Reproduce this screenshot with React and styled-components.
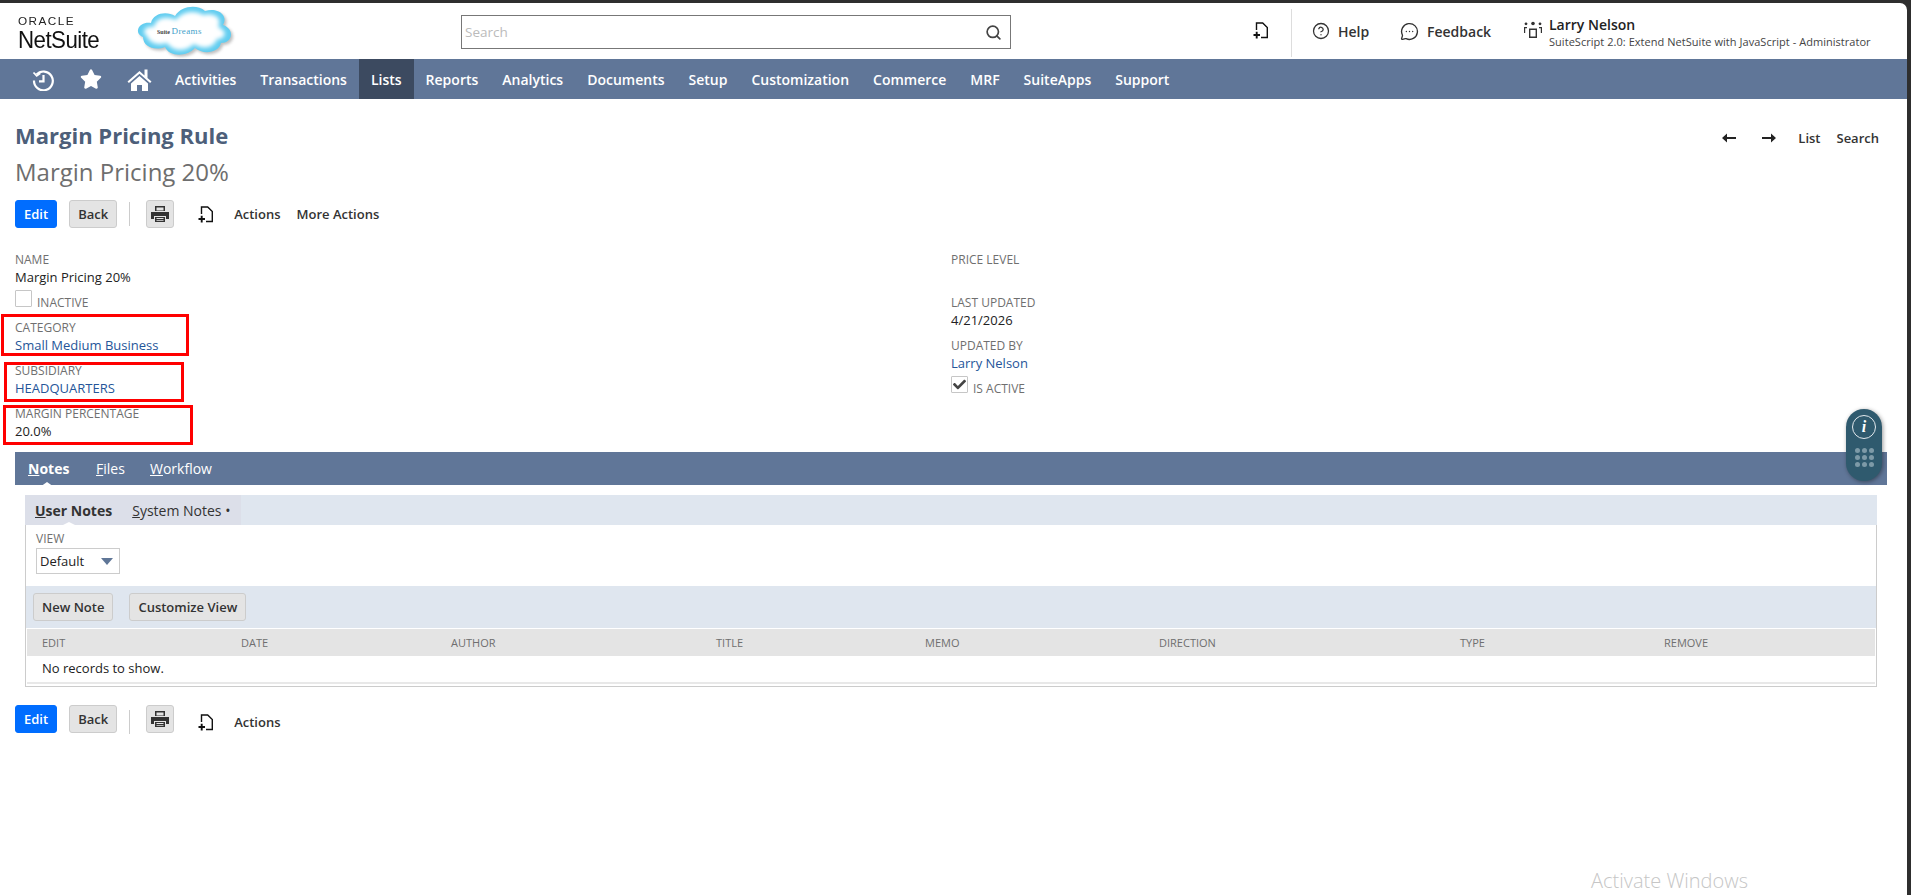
import React from "react";
import styled, { createGlobalStyle } from "styled-components";
import { Search as SearchGlyph, CircleHelp, MessageCircleMore } from "lucide-react";
import { FaStar, FaCheck } from "react-icons/fa";

const navItems = [
  "Activities",
  "Transactions",
  "Lists",
  "Reports",
  "Analytics",
  "Documents",
  "Setup",
  "Customization",
  "Commerce",
  "MRF",
  "SuiteApps",
  "Support",
];

const columns = ["EDIT", "DATE", "AUTHOR", "TITLE", "MEMO", "DIRECTION", "TYPE", "REMOVE"];

const AddIcon = () => (
  <svg width="16" height="17" viewBox="0 0 16 17" fill="none" stroke="#111" strokeWidth="1.4">
    <path d="M3.5 8V1h6.2l4.6 4.6V15.5H8" />
    <path d="M0.5 13h6.5M3.7 9.8v6.6" strokeWidth="1.9" />
  </svg>
);

const PrintIcon = () => (
  <svg width="18" height="16" viewBox="0 0 18 16">
    <path d="M4 0h10v5H4z M0 6h18v7h-3v-3H3v3H0z" fill="#333" />
    <path d="M4 11h10v5H4z" fill="#333" />
    <path d="M5.5 1.5h7v3h-7z M5.5 12h7v1h-7z M5.5 14h7v.8h-7z" fill="#e4e4e4" />
  </svg>
);

const RecordToolbar = ({ bottom }) => (
  <Toolbar>
    <EditButton>Edit</EditButton>
    <GreyButton>Back</GreyButton>
    <ToolDivider $bottom={bottom} />
    <PrintButton>
      <PrintIcon />
    </PrintButton>
    <ActionIcon $bottom={bottom}>
      <AddIcon />
    </ActionIcon>
    <ActionLink $bottom={bottom}>Actions</ActionLink>
    {!bottom && <MoreLink>More Actions</MoreLink>}
  </Toolbar>
);

const App = () => {
  return (
    <Frame>
      <GlobalStyle />
      <Header>
        <LogoBlock>
          <OracleText>ORACLE</OracleText>
          <NetSuiteText>NetSuite</NetSuiteText>
        </LogoBlock>
        <CloudHolder>
          <svg width="104" height="58" viewBox="-2 -3 104 58">
            <defs>
              <filter id="soft" x="-20%" y="-20%" width="140%" height="140%">
                <feGaussianBlur stdDeviation="2" />
              </filter>
              <filter id="shade" x="-20%" y="-20%" width="140%" height="140%">
                <feGaussianBlur stdDeviation="1.4" />
              </filter>
            </defs>
            <path
              d="M8 32C-2 28 4 16 16 18 18 8 32 6 40 11 46 1 62-1 70 6 82 2 94 10 88 20 100 24 98 38 86 38 84 48 68 50 60 43 52 52 34 52 30 42 20 46 8 42 8 32Z"
              fill="#8b8b8b"
              opacity="0.55"
              filter="url(#shade)"
              transform="translate(2 2)"
            />
            <path
              d="M8 32C-2 28 4 16 16 18 18 8 32 6 40 11 46 1 62-1 70 6 82 2 94 10 88 20 100 24 98 38 86 38 84 48 68 50 60 43 52 52 34 52 30 42 20 46 8 42 8 32Z"
              fill="#62cdf0"
            />
            <path
              d="M12 31C6 27 10 20 19 22 21 12 32 11 41 15 47 6 61 5 68 10 79 7 88 13 83 22 93 26 91 34 82 34 79 43 68 45 59 39 51 47 38 47 32 38 23 41 14 38 12 31Z"
              fill="#fff"
              filter="url(#soft)"
            />
            <text x="22" y="29" fontFamily="Liberation Serif, serif" fontSize="6" fontWeight="700" fill="#444">
              Suite
            </text>
            <text x="36.5" y="29" fontFamily="Liberation Serif, serif" fontSize="9" letterSpacing="0.4" fill="#3f9fca">
              Dreams
            </text>
          </svg>
        </CloudHolder>
        <SearchBox>
          <SearchInput placeholder="Search" />
          <SearchGlyph size={17} color="#444" strokeWidth={2.4} />
        </SearchBox>
        <HeaderRight>
          <AddHolder>
            <AddIcon />
          </AddHolder>
          <HeaderDivider />
          <HeaderLink $width={88}>
            <CircleHelp size={18} color="#333" strokeWidth={1.7} />
            <span>Help</span>
          </HeaderLink>
          <HeaderLink $width={123}>
            <MessageCircleMore size={19} color="#333" strokeWidth={1.7} />
            <span>Feedback</span>
          </HeaderLink>
          <RoleIcon>
            <svg width="20" height="18" viewBox="0 0 20 18" fill="#333">
              <circle cx="10" cy="2.5" r="1.8" />
              <circle cx="3" cy="2.8" r="1.4" />
              <circle cx="17" cy="2.8" r="1.4" />
              <path d="M6 7.5h8V17H6z M7.4 9v6.6h5.2V9z" fillRule="evenodd" />
              <path d="M1 6h3v1.2H2.2V12H1z M16 6h3v6h-1.2V7.2H16z" />
            </svg>
          </RoleIcon>
          <UserBlock>
            <UserName>Larry Nelson</UserName>
            <UserRole>SuiteScript 2.0: Extend NetSuite with JavaScript - Administrator</UserRole>
          </UserBlock>
        </HeaderRight>
      </Header>

      <Nav>
        <NavIcon $width={32}>
          <svg width="22" height="24" viewBox="0 0 22 24" fill="none" stroke="#fff" strokeWidth="2.2">
            <path d="M4.5 7.5A9.4 9.4 0 1 1 2 13.5" />
            <path d="M1.5 5.5l3.2 3.4 3.6-2.6" strokeWidth="1.8" />
            <path d="M11.5 8v6.4H7" />
          </svg>
        </NavIcon>
        <NavIcon $width={64}>
          <FaStar size={22} color="#fff" />
        </NavIcon>
        <NavIcon $width={32}>
          <svg width="25" height="24" viewBox="0 0 25 24" fill="#fff">
            <path d="M12.5 4L0.5 14.5l1.4 1.4L12.5 6.8l10.6 9.1 1.4-1.4-4-3.5V2.5h-3V8.5z" />
            <path d="M4 16.5L12.5 9l8.5 7.5V24h-6v-6h-5v6H4z" />
          </svg>
        </NavIcon>
        <NavList>
          {navItems.map((item) => (
            <NavItem key={item} $active={item === "Lists"}>
              {item}
            </NavItem>
          ))}
        </NavList>
      </Nav>

      <Main>
        <TitleRow>
          <PageTitle>Margin Pricing Rule</PageTitle>
          <PageLinks>
            <ArrowHolder>
              <svg width="14" height="10" viewBox="0 0 14 10" fill="#222">
                <path d="M0 5l5-4.5V4h9v2H5v3.5z" />
              </svg>
            </ArrowHolder>
            <ArrowHolder>
              <svg width="14" height="10" viewBox="0 0 14 10" fill="#222">
                <path d="M14 5L9 .5V4H0v2h9v3.5z" />
              </svg>
            </ArrowHolder>
            <PageLink>List</PageLink>
            <PageLink>Search</PageLink>
          </PageLinks>
        </TitleRow>
        <SubTitle>Margin Pricing 20%</SubTitle>
        <RecordToolbar />

        <FormGrid>
          <FormColumn>
            <Field>
              <Label>NAME</Label>
              <Value>Margin Pricing 20%</Value>
            </Field>
            <CheckRow>
              <CheckBox />
              <Label>INACTIVE</Label>
            </CheckRow>
            <Field $top={9}>
              <Label>CATEGORY</Label>
              <LinkValue>Small Medium Business</LinkValue>
              <RedMark $left={-14} $width={188} $top={-4} $bottom={-2} />
            </Field>
            <Field $top={7}>
              <Label>SUBSIDIARY</Label>
              <LinkValue>HEADQUARTERS</LinkValue>
              <RedMark $left={-11} $width={180} $top={1} $bottom={-5} />
            </Field>
            <Field $top={7}>
              <Label>MARGIN PERCENTAGE</Label>
              <Value>20.0%</Value>
              <RedMark $left={-12} $width={190} $top={1} $bottom={-5} />
            </Field>
          </FormColumn>
          <FormColumn>
            <Field>
              <Label>PRICE LEVEL</Label>
              <Value />
            </Field>
            <Field $top={7}>
              <Label>LAST UPDATED</Label>
              <Value>4/21/2026</Value>
            </Field>
            <Field $top={7}>
              <Label>UPDATED BY</Label>
              <LinkValue>Larry Nelson</LinkValue>
            </Field>
            <CheckRow>
              <CheckBox>
                <FaCheck size={13} color="#444" />
              </CheckBox>
              <Label>IS ACTIVE</Label>
            </CheckRow>
          </FormColumn>
        </FormGrid>

        <TabBar>
          <MainTab $active $width={68}>
            <u>N</u>otes
          </MainTab>
          <MainTab $width={54}>
            <u>F</u>iles
          </MainTab>
          <MainTab>
            <u>W</u>orkflow
          </MainTab>
          <InfoWidget>
            <InfoCircle>i</InfoCircle>
            <InfoDots>
              {Array.from({ length: 9 }).map((_, i) => (
                <InfoDot key={i} />
              ))}
            </InfoDots>
          </InfoWidget>
        </TabBar>

        <SubPanel>
          <SubTabs>
            <SubTabGroup>
              <SubTab $active>
                <u>U</u>ser Notes
              </SubTab>
              <SubTab>
                <u>S</u>ystem Notes •
              </SubTab>
            </SubTabGroup>
          </SubTabs>
          <PanelBody>
            <ViewArea>
              <ViewLabel>VIEW</ViewLabel>
              <SelectBox>
                <span>Default</span>
                <Caret />
              </SelectBox>
            </ViewArea>
            <ButtonBand>
              <GreyButton>New Note</GreyButton>
              <GreyButton>Customize View</GreyButton>
            </ButtonBand>
            <TableHead>
              {columns.map((col) => (
                <span key={col}>{col}</span>
              ))}
            </TableHead>
            <EmptyRow>No records to show.</EmptyRow>
          </PanelBody>
        </SubPanel>

        <BottomBar>
          <RecordToolbar bottom />
        </BottomBar>
      </Main>
      <Watermark>Activate Windows</Watermark>
    </Frame>
  );
};

export default App;

const GlobalStyle = createGlobalStyle`
  html, body {
    margin: 0;
    height: 100%;
    overflow: hidden;
    background-color: #2e2e2e;
  }
  body {
    font-family: "Open Sans", "Liberation Sans", sans-serif;
    font-size: 13px;
    color: #222;
  }
  * {
    box-sizing: border-box;
  }
`;

const Frame = styled.div`
  position: relative;
  margin: 3px 4px 0 0;
  height: 892px;
  background-color: #fff;
  border-top-right-radius: 7px;
  overflow: hidden;
`;

const Header = styled.div`
  height: 56px;
  display: flex;
  align-items: center;
`;

const LogoBlock = styled.div`
  width: 135px;
  padding: 6px 0 0 18px;
  display: flex;
  flex-direction: column;
`;

const OracleText = styled.div`
  font-family: "Liberation Sans", sans-serif;
  font-size: 10.5px;
  line-height: 11px;
  letter-spacing: 1.3px;
  transform: scaleX(1.12);
  transform-origin: left;
  color: #222;
`;

const NetSuiteText = styled.div`
  font-family: "Liberation Sans", sans-serif;
  font-size: 24px;
  line-height: 26px;
  letter-spacing: -0.6px;
  transform: scaleX(0.93);
  transform-origin: left;
  color: #111;
`;

const CloudHolder = styled.div`
  width: 326px;
  height: 56px;
  display: flex;
  svg {
    display: block;
    margin-left: -2px;
    margin-top: -1px;
  }
`;

const SearchBox = styled.div`
  width: 550px;
  height: 34px;
  margin-top: 2px;
  padding: 0 8px 0 3px;
  border: 1px solid #777;
  display: flex;
  align-items: center;
`;

const SearchInput = styled.input`
  flex: 1;
  border: 0;
  outline: 0;
  padding: 0;
  font-family: "Open Sans", sans-serif;
  font-size: 13.5px;
  &::placeholder {
    color: #bbb;
  }
`;

const HeaderRight = styled.div`
  flex: 1;
  height: 100%;
  display: flex;
  align-items: center;
`;

const AddHolder = styled.div`
  width: 280px;
  padding-left: 242px;
  height: 18px;
  flex-shrink: 0;
`;

const HeaderDivider = styled.div`
  width: 1px;
  height: 48px;
  margin-top: 4px;
  margin-right: 20px;
  background-color: #ddd;
`;

const HeaderLink = styled.div`
  width: ${(props) => props.$width}px;
  display: flex;
  align-items: center;
  gap: 8px;
  font-size: 14px;
  font-weight: 600;
  color: #333;
`;

const RoleIcon = styled.div`
  width: 26px;
  margin-top: 2px;
`;

const UserBlock = styled.div`
  display: flex;
  flex-direction: column;
  white-space: nowrap;
  margin-top: 3px;
`;

const UserName = styled.div`
  font-size: 14px;
  line-height: 17px;
  font-weight: 600;
  color: #222;
`;

const UserRole = styled.div`
  font-size: 11px;
  line-height: 17px;
  letter-spacing: 0.04px;
  color: #444;
`;

const Nav = styled.div`
  height: 40px;
  background-color: #607698;
  display: flex;
  align-items: center;
  padding-left: 27px;
`;

const NavIcon = styled.div`
  width: ${(props) => props.$width}px;
  display: flex;
  justify-content: center;
  svg {
    display: block;
  }
`;

const NavList = styled.div`
  height: 100%;
  display: flex;
  padding-left: 8px;
`;

const NavItem = styled.div`
  height: 100%;
  padding: 0 12px;
  display: flex;
  align-items: center;
  font-size: 14px;
  font-weight: 600;
  color: #fff;
  background-color: ${(props) => (props.$active ? "#3c4a60" : "transparent")};
`;

const Main = styled.div`
  padding: 22px 20px 0 15px;
`;

const TitleRow = styled.div`
  height: 30px;
  display: flex;
  align-items: center;
  justify-content: space-between;
`;

const PageTitle = styled.div`
  font-size: 22px;
  line-height: 28px;
  margin-top: -2px;
  font-weight: 700;
  color: #4d5f7a;
`;

const PageLinks = styled.div`
  display: flex;
  align-items: center;
  padding-right: 8px;
  margin-top: 4px;
`;

const ArrowHolder = styled.div`
  width: 40px;
  padding-left: 4px;
  display: flex;
  svg {
    display: block;
  }
`;

const PageLink = styled.div`
  font-size: 13px;
  font-weight: 600;
  color: #333;
  & + & {
    margin-left: 16px;
  }
`;

const SubTitle = styled.div`
  height: 30px;
  margin-top: 6px;
  font-size: 24px;
  line-height: 30px;
  color: #6e6e6e;
`;

const Toolbar = styled.div`
  height: 28px;
  margin-top: 13px;
  display: flex;
  align-items: center;
`;

const ButtonBase = styled.button`
  height: 28px;
  padding: 0 8px;
  border-radius: 3px;
  font-family: "Open Sans", sans-serif;
  font-size: 13px;
  font-weight: 600;
  cursor: pointer;
`;

const EditButton = styled(ButtonBase)`
  background-color: #006dff;
  border: 1px solid #006dff;
  color: #fff;
  margin-right: 12px;
`;

const GreyButton = styled(ButtonBase)`
  background-color: #e4e4e4;
  border: 1px solid #ccc;
  color: #333;
`;

const ToolDivider = styled.div`
  width: 1px;
  height: 24px;
  margin: ${(props) => (props.$bottom ? "6px" : "0")} 16px 0 12px;
  background-color: #ccc;
`;

const PrintButton = styled(GreyButton)`
  width: 28px;
  padding: 0;
  display: flex;
  align-items: center;
  justify-content: center;
`;

const ActionIcon = styled.div`
  margin: ${(props) => (props.$bottom ? "6px" : "0")} 0 0 24px;
  width: 36px;
  height: 17px;
`;

const ActionLink = styled.div`
  margin-top: ${(props) => (props.$bottom ? "6px" : "0")};
  font-size: 13px;
  font-weight: 600;
  color: #333;
`;

const MoreLink = styled(ActionLink)`
  margin-left: 16px;
`;

const FormGrid = styled.div`
  margin-top: 22px;
  display: grid;
  grid-template-columns: 936px 1fr;
  height: 202px;
`;

const FormColumn = styled.div`
  display: flex;
  flex-direction: column;
`;

const Field = styled.div`
  position: relative;
  margin-top: ${(props) => props.$top || 0}px;
`;

const Label = styled.div`
  height: 18px;
  font-size: 12px;
  line-height: 20px;
  color: #6f6f6f;
`;

const Value = styled.div`
  height: 18px;
  font-size: 13px;
  line-height: 18px;
  color: #222;
`;

const LinkValue = styled(Value)`
  color: #255599;
`;

const RedMark = styled.div`
  position: absolute;
  left: ${(props) => props.$left}px;
  width: ${(props) => props.$width}px;
  top: ${(props) => props.$top}px;
  bottom: ${(props) => props.$bottom}px;
  border: 3px solid #f00;
`;

const CheckRow = styled.div`
  margin-top: 4px;
  display: flex;
  align-items: flex-start;
  gap: 5px;
  height: 19px;
  ${Label} {
    margin-top: 3px;
  }
`;

const CheckBox = styled.div`
  width: 17px;
  height: 17px;
  border: 1px solid #c6c6c6;
  border-radius: 1px;
  display: flex;
  align-items: center;
  justify-content: center;
`;

const TabBar = styled.div`
  position: relative;
  height: 33px;
  background-color: #607698;
  display: flex;
  align-items: center;
  padding-left: 13px;
`;

const MainTab = styled.div`
  position: relative;
  width: ${(props) => (props.$width ? `${props.$width}px` : "auto")};
  font-size: 14px;
  font-weight: ${(props) => (props.$active ? 700 : 500)};
  color: #fff;
  ${(props) =>
    props.$active &&
    `&::after {
      content: "";
      position: absolute;
      left: 12px;
      bottom: -9px;
      border-left: 7px solid transparent;
      border-right: 7px solid transparent;
      border-bottom: 5px solid #fff;
    }`}
`;

const InfoWidget = styled.div`
  position: absolute;
  top: -43px;
  right: 5px;
  width: 36px;
  height: 72px;
  border-radius: 18px;
  background-color: #2f5a6e;
  box-shadow: 1px 1px 4px rgba(0, 0, 0, 0.4);
  display: flex;
  flex-direction: column;
  align-items: center;
  padding-top: 6px;
`;

const InfoCircle = styled.div`
  width: 24px;
  height: 24px;
  border-radius: 50%;
  border: 1.5px solid #e3e9ed;
  color: #fff;
  font-family: "Liberation Serif", serif;
  font-style: italic;
  font-weight: 700;
  font-size: 16px;
  line-height: 21px;
  text-align: center;
`;

const InfoDots = styled.div`
  margin-top: 9px;
  display: grid;
  grid-template-columns: repeat(3, 5px);
  gap: 2px;
`;

const InfoDot = styled.div`
  width: 5px;
  height: 5px;
  border-radius: 50%;
  background-color: #7d9aa7;
`;

const SubPanel = styled.div`
  margin: 10px 10px 0 10px;
`;

const SubTabs = styled.div`
  height: 30px;
  background-color: #dfe6ef;
`;

const SubTabGroup = styled.div`
  width: 216px;
  height: 100%;
  background-color: #dcdfe9;
  display: flex;
  align-items: center;
  padding-left: 10px;
  gap: 20px;
`;

const SubTab = styled.div`
  position: relative;
  font-size: 14px;
  font-weight: ${(props) => (props.$active ? 700 : 400)};
  color: #333;
  ${(props) =>
    props.$active &&
    `&::after {
      content: "";
      position: absolute;
      left: 26px;
      bottom: -6px;
      border-left: 8px solid transparent;
      border-right: 8px solid transparent;
      border-bottom: 4px solid #fff;
    }`}
`;

const PanelBody = styled.div`
  height: 162px;
  border: 1px solid #ccc;
  border-top: 0;
  border-bottom-width: 1.5px;
`;

const ViewArea = styled.div`
  height: 61px;
  padding: 6px 0 0 10px;
`;

const ViewLabel = styled.div`
  font-size: 12px;
  line-height: 16px;
  color: #6f6f6f;
`;

const SelectBox = styled.div`
  width: 84px;
  height: 26px;
  margin-top: 1px;
  padding: 0 6px 0 3px;
  border: 1px solid #ccc;
  display: flex;
  align-items: center;
  justify-content: space-between;
  font-size: 13px;
  color: #222;
`;

const Caret = styled.div`
  border-left: 6px solid transparent;
  border-right: 6px solid transparent;
  border-top: 7px solid #5f7697;
`;

const ButtonBand = styled.div`
  height: 42px;
  background-color: #dfe6ef;
  display: flex;
  align-items: center;
  gap: 16px;
  padding-left: 7px;
`;

const TableHead = styled.div`
  height: 27px;
  margin: 1px 1px 0 1px;
  background-color: #e4e4e4;
  display: grid;
  grid-template-columns: 199px 210px 265px 209px 234px 301px 204px 1fr;
  align-items: center;
  padding-left: 15px;
  font-size: 11px;
  color: #6f6f6f;
`;

const EmptyRow = styled.div`
  height: 28px;
  margin: 0 1px;
  padding: 0 0 3px 15px;
  display: flex;
  align-items: center;
  font-size: 13px;
  color: #222;
  border-bottom: 2px solid #e8e8e8;
`;

const BottomBar = styled.div`
  margin-top: 18px;
  ${Toolbar} {
    margin-top: 0;
  }
`;

const Watermark = styled.div`
  position: absolute;
  left: 1591px;
  top: 864px;
  font-family: "Open Sans", sans-serif;
  font-weight: 300;
  font-size: 20px;
  line-height: 28px;
  color: #c6c6c6;
`;
